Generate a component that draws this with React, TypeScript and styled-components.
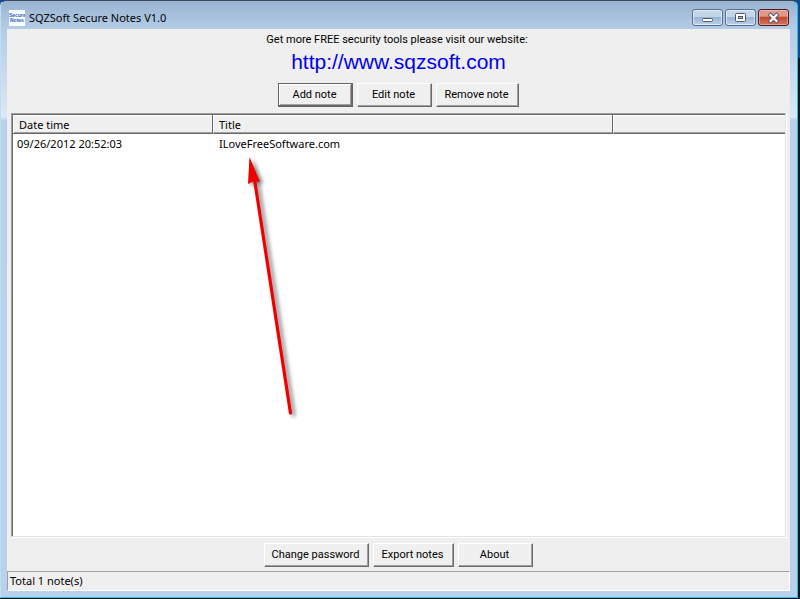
import React from "react";
import styled, { createGlobalStyle, css } from "styled-components";

const GlobalStyle = createGlobalStyle`
  * { box-sizing: border-box; }
  body { margin: 0; background: #0a1014; }
`;

const uiFont = `"Noto Sans", "Open Sans", sans-serif`;
const dialogFont = `Roboto, "Noto Sans", sans-serif`;

const Desktop = styled.div`
  min-height: 100vh;
  display: flex;
  padding: 0 2px 1px 0;
  background: linear-gradient(#0d4c94 0 58px, #10181c 58px);
  color: #000;
`;

const WindowFrame = styled.main`
  flex: 1;
  display: flex;
  flex-direction: column;
  padding: 0 7px 6px 6px;
  border: 1px solid #35b9d6;
  border-top-color: #3c4a5a;
  border-left-color: #c3dcf0;
  border-radius: 6px 6px 0 0;
  background: linear-gradient(#98b4d2 0, #b4cce6 28px, #dbe8f6 116px, #b9d1ea 119px, #b9d1ee 100%);
`;

const TitleBar = styled.header`
  height: 28px;
  flex: none;
  display: flex;
  align-items: center;
  gap: 4px;
  padding: 5px 1px 0 2px;
`;

const AppTitle = styled.h1`
  flex: 1;
  margin: 0;
  font: 400 11px/16px ${uiFont};
`;

const WindowControls = styled.div`
  display: flex;
  gap: 2px;
`;

const ControlButton = styled.button<{ $close?: boolean }>`
  width: 31px;
  height: 17px;
  display: grid;
  place-items: center;
  padding: 0;
  border: 1px solid #56708f;
  border-radius: 3px;
  box-shadow: inset 0 0 0 1px rgba(255, 255, 255, 0.55);
  background: linear-gradient(#c3d5e9 0 45%, #9bb6d3 50%, #b9d0ea);
  ${(p) =>
    p.$close &&
    css`
      border-color: #4b1a22;
      box-shadow: inset 0 0 0 1px rgba(255, 210, 200, 0.5);
      background: linear-gradient(#e0988a 0 40%, #c34934 50%, #d4745c);
    `}
`;

const Client = styled.div`
  flex: 1;
  display: flex;
  flex-direction: column;
  background: #efefef;
`;

const Intro = styled.section`
  height: 84px;
  display: flex;
  flex-direction: column;
  align-items: center;
  padding-top: 4px;
`;

const IntroText = styled.p`
  margin: 0 0 3px;
  padding-right: 3px;
  font: 11px/14px ${dialogFont};
`;

const SiteLink = styled.a`
  font: 21px/24px "Liberation Sans", Arial, sans-serif;
  color: #0000f0;
  text-decoration: none;
`;

const ButtonRow = styled.div`
  display: flex;
  justify-content: center;
  gap: 4px;
  padding-top: 9px;
`;

const buttonWidths = { normal: 75, export: 81, remove: 83, password: 105 };

const PushButton = styled.button<{ $size?: keyof typeof buttonWidths; $default?: boolean }>`
  width: ${(p) => buttonWidths[p.$size ?? "normal"]}px;
  height: 24px;
  padding: 0 2px 0 0;
  border: 1px solid;
  border-color: #fff #696969 #696969 #fff;
  box-shadow: inset -1px -1px #a0a0a0;
  background: #f0f0f0;
  color: #000;
  white-space: nowrap;
  font: 11px/14px ${dialogFont};
  ${(p) =>
    p.$default &&
    css`
      border-color: #646464;
      box-shadow: inset -1px -1px #696969, inset 1px 1px #fff, inset -2px -2px #a0a0a0;
    `}
`;

const NotesList = styled.section`
  position: relative;
  flex: 1;
  margin: 0 4px;
  border: 1px solid;
  border-color: #a0a0a0 #e3e3e3 #e3e3e3 #a0a0a0;
  box-shadow: inset 1px 1px #696969, 1px 1px #fff;
  padding: 1px 0 0 1px;
  background: #fff;
`;

const NotesTable = styled.table`
  width: 100%;
  table-layout: fixed;
  border-collapse: separate;
  border-spacing: 0;
  text-align: left;
`;

const HeadCell = styled.th<{ $last?: boolean }>`
  width: ${(p) => (p.$last ? "auto" : "200px")};
  height: 19px;
  padding: 0 6px;
  border-bottom: 1px solid #696969;
  border-right: ${(p) => (p.$last ? "0" : "1px solid #696969")};
  box-shadow: inset 1px 1px #fff, inset 0 -1px #a0a0a0;
  background: #f0f0f0;
  font: 400 11px/17px ${uiFont};
`;

const TitleHead = styled(HeadCell)`
  width: 400px;
`;

const Cell = styled.td`
  height: 19px;
  padding: 0 6px;
  font: 11px/18px ${uiFont};
  &:first-child { padding-left: 4px; }
`;

const Pointer = styled.svg`
  position: absolute;
  left: 225px;
  top: 38px;
  pointer-events: none;
  filter: drop-shadow(3px 2px 2px rgba(0, 0, 0, 0.55));
`;

const Footer = styled.div`
  height: 34px;
  display: flex;
  justify-content: center;
  gap: 4px;
  padding: 6px 0 4px;
`;

const StatusBar = styled.footer`
  height: 20px;
  padding: 1px 2px;
  border: 1px solid;
  border-color: #a0a0a0 #fff #fff #a0a0a0;
  font: 11px/16px ${uiFont};
`;

function AppLogo() {
  return (
    <svg width="16" height="16" viewBox="0 0 16 16" aria-hidden="true">
      <rect width="16" height="16" fill="#f8fbff" />
      <g fill="#2864b4" fontFamily="Liberation Sans, sans-serif" fontSize="5" fontWeight="700">
        <text x="0" y="7">Secure</text>
        <text x="1" y="12">Notes</text>
      </g>
    </svg>
  );
}

function ControlIcon({ kind }: { kind: "min" | "max" | "close" }) {
  return (
    <svg width="15" height="12" viewBox="0 0 15 12" aria-hidden="true">
      {kind === "min" && <rect x="2.5" y="6.5" width="10" height="3" rx="1" fill="#fff" stroke="#4f5967" />}
      {kind === "max" && (
        <>
          <rect x="2.5" y="1.5" width="10" height="8" rx="1" fill="#fff" stroke="#4f5967" />
          <rect x="5.5" y="4.5" width="4" height="2" fill="#9cb6d8" stroke="#4f5967" />
        </>
      )}
      {kind === "close" && (
        <>
          <path d="M4.500 3l6 6M10.500 3l-6 6" stroke="#555365" strokeWidth="4" strokeLinecap="square" />
          <path d="M4.500 3l6 6M10.500 3l-6 6" stroke="#fff" strokeWidth="2.200" strokeLinecap="square" />
        </>
      )}
    </svg>
  );
}

const notes = [{ date: "09/26/2012 20:52:03", title: "ILoveFreeSoftware.com" }];

export default function App() {
  return (
    <>
      <GlobalStyle />
      <Desktop>
        <WindowFrame>
          <TitleBar>
            <AppLogo />
            <AppTitle>SQZSoft Secure Notes V1.0</AppTitle>
            <WindowControls>
              <ControlButton aria-label="Minimize"><ControlIcon kind="min" /></ControlButton>
              <ControlButton aria-label="Maximize"><ControlIcon kind="max" /></ControlButton>
              <ControlButton $close aria-label="Close"><ControlIcon kind="close" /></ControlButton>
            </WindowControls>
          </TitleBar>
          <Client>
            <Intro>
              <IntroText>Get more FREE security tools please visit our website:</IntroText>
              <SiteLink href="http://www.sqzsoft.com">http://www.sqzsoft.com</SiteLink>
              <ButtonRow>
                <PushButton $default>Add note</PushButton>
                <PushButton>Edit note</PushButton>
                <PushButton $size="remove">Remove note</PushButton>
              </ButtonRow>
            </Intro>
            <NotesList>
              <NotesTable>
                <thead>
                  <tr>
                    <HeadCell scope="col">Date time</HeadCell>
                    <TitleHead scope="col">Title</TitleHead>
                    <HeadCell $last />
                  </tr>
                </thead>
                <tbody>
                  {notes.map((n) => (
                    <tr key={n.date}>
                      <Cell>{n.date}</Cell>
                      <Cell>{n.title}</Cell>
                      <Cell />
                    </tr>
                  ))}
                </tbody>
              </NotesTable>
              <Pointer width="65" height="270" viewBox="0 0 65 270" aria-hidden="true">
                <path d="M17 24L53.500 261" stroke="#ee0000" strokeWidth="3.200" strokeLinecap="round" />
                <path d="M12.500 5L23 30L17 29L11 32Z" fill="#ee0000" />
              </Pointer>
            </NotesList>
            <Footer>
              <PushButton $size="password">Change password</PushButton>
              <PushButton $size="export">Export notes</PushButton>
              <PushButton>About</PushButton>
            </Footer>
            <StatusBar>Total 1 note(s)</StatusBar>
          </Client>
        </WindowFrame>
      </Desktop>
    </>
  );
}
